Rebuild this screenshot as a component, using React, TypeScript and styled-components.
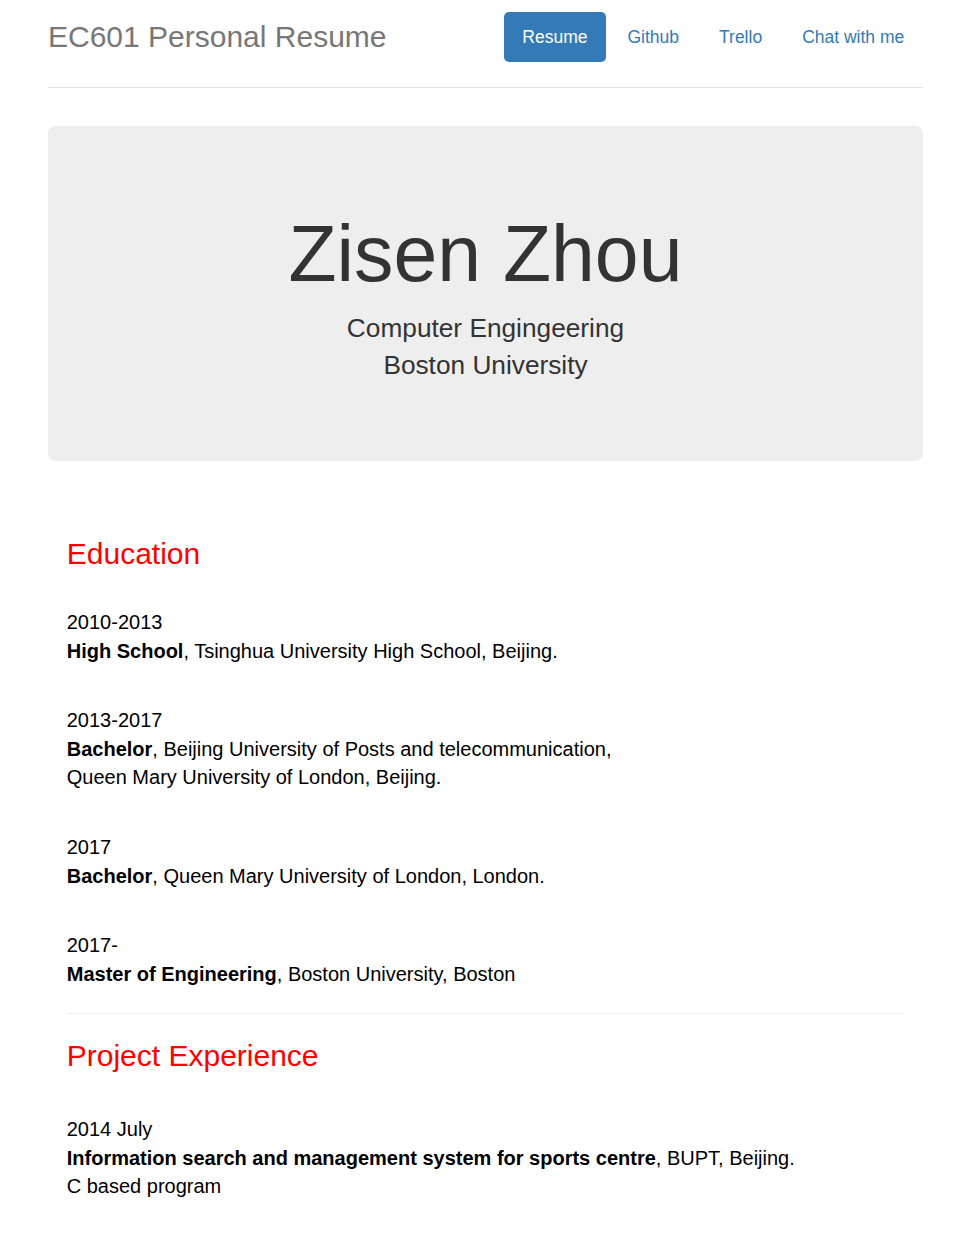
import React from "react";
import styled, { createGlobalStyle } from "styled-components";

const GlobalStyle = createGlobalStyle`
  html, body {
    margin: 0;
    padding: 0;
    background: #ffffff;
  }
  body {
    font-family: "Liberation Sans", Arial, Helvetica, sans-serif;
    color: #333333;
    -webkit-font-smoothing: antialiased;
  }
  * { box-sizing: border-box; }
`;

const Page = styled.div`
  width: 875px;
  margin-left: 48px;
  padding-top: 12px;
  padding-bottom: 40px;
  display: flex;
  flex-direction: column;
`;

const Header = styled.header`
  display: flex;
  justify-content: space-between;
  align-items: flex-start;
  padding-bottom: 25px;
  border-bottom: 1px solid #e5e5e5;
`;

const Brand = styled.h3`
  margin: 0;
  font-size: 30px;
  line-height: 50px;
  font-weight: 400;
  color: #777777;
`;

const Nav = styled.nav`
  display: flex;
  gap: 2.5px;
`;

const NavItem = styled.a<{ $active?: boolean }>`
  display: block;
  height: 50px;
  padding: 0 18.75px;
  line-height: 50px;
  font-size: 17.5px;
  border-radius: 5px;
  text-decoration: none;
  cursor: pointer;
  color: ${(p) => (p.$active ? "#ffffff" : "#337ab7")};
  background: ${(p) => (p.$active ? "#337ab7" : "transparent")};
`;

const Jumbotron = styled.section`
  margin-top: 38px;
  padding: 60px 0 59px;
  background: #eeeeee;
  border-radius: 7.5px;
  text-align: center;
  color: #333333;
`;

const Name = styled.h1`
  margin: 25px 0 12.5px;
  font-size: 78.75px;
  line-height: 1.1;
  font-weight: 400;
`;

const Lead = styled.p`
  margin: 0 0 18.75px;
  font-size: 26.25px;
  line-height: 1.4;
  font-weight: 400;
`;

const Marketing = styled.main`
  display: flex;
  flex-direction: column;
  padding: 75.4px 18.75px 0;
  color: #000000;
`;

const SectionTitle = styled.h3`
  margin: 0;
  font-size: 30px;
  line-height: 33px;
  font-weight: 400;
  color: #ff0000;
`;

const EntryList = styled.div<{ $top: number }>`
  display: flex;
  flex-direction: column;
  gap: 41.1px;
  margin-top: ${(p) => p.$top}px;
`;

const Entry = styled.p`
  margin: 0;
  font-size: 20px;
  line-height: 28.57px;
`;

const Strong = styled.strong`
  font-weight: 700;
`;

const Divider = styled.hr`
  margin: 25px 0;
  border: 0;
  border-top: 1px solid #eeeeee;
  height: 0;
`;

const navItems = [
  { label: "Resume", active: true },
  { label: "Github" },
  { label: "Trello" },
  { label: "Chat with me" },
];

export default function App() {
  return (
    <>
      <GlobalStyle />
      <Page>
        <Header>
          <Brand>EC601 Personal Resume</Brand>
          <Nav>
            {navItems.map((n) => (
              <NavItem key={n.label} $active={n.active}>
                {n.label}
              </NavItem>
            ))}
          </Nav>
        </Header>

        <Jumbotron>
          <Name>Zisen Zhou</Name>
          <Lead>
            Computer Engingeering
            <br />
            Boston University
          </Lead>
        </Jumbotron>

        <Marketing>
          <SectionTitle>Education</SectionTitle>
          <EntryList $top={38.3}>
            <Entry>
              2010-2013
              <br />
              <Strong>High School</Strong>, Tsinghua University High School, Beijing.
            </Entry>
            <Entry>
              2013-2017
              <br />
              <Strong>Bachelor</Strong>, Beijing University of Posts and telecommunication,
              <br />
              Queen Mary University of London, Beijing.
            </Entry>
            <Entry>
              2017
              <br />
              <Strong>Bachelor</Strong>, Queen Mary University of London, London.
            </Entry>
            <Entry>
              2017-
              <br />
              <Strong>Master of Engineering</Strong>, Boston University, Boston
            </Entry>
          </EntryList>

          <Divider />

          <SectionTitle>Project Experience</SectionTitle>
          <EntryList $top={42.8}>
            <Entry>
              2014 July
              <br />
              <Strong>Information search and management system for sports centre</Strong>, BUPT, Beijing.
              <br />
              C based program
            </Entry>
          </EntryList>
        </Marketing>
      </Page>
    </>
  );
}
